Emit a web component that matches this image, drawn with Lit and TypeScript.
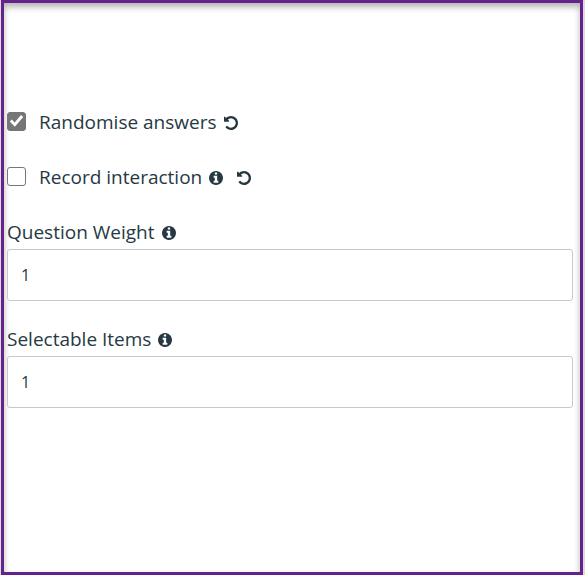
import { LitElement, html, css, svg } from "lit";
import { customElement } from "lit/decorators.js";

const UNDO =
  "M1536 896q0 156-61 298t-164 245-245 164-298 61q-172 0-327-72.500T177 1387q-7-10-6.500-22.500T179 1344l137-138q10-9 25-9 16 2 23 12 73 95 179 147t225 52q104 0 198.500-40.500T1130 1258t109.500-163.500T1280 896t-40.500-198.500T1130 534 966.500 424.500 768 384q-98 0-188 35.500T420 521l137 138q31 30 14 69-17 40-59 40H64q-26 0-45-19T0 704V256q0-42 40-59 39-17 69 14l130 129q107-101 244.500-156.500T768 128q156 0 298 61t245 164 164 245 61 298z";
const INFO =
  "M1024 1376v-160q0-14-9-23t-23-9h-96V672q0-14-9-23t-23-9H544q-14 0-23 9t-9 23v160q0 14 9 23t23 9h96v320h-96q-14 0-23 9t-9 23v160q0 14 9 23t23 9h448q14 0 23-9t9-23zM896 480V320q0-14-9-23t-23-9H672q-14 0-23 9t-9 23v160q0 14 9 23t23 9h192q14 0 23-9t9-23zm640 416q0 209-103 385.500T1153.500 1561 768 1664t-385.500-103T103 1281.500 0 896t103-385.500T382.500 231 768 128t385.500 103T1433 510.500 1536 896z";

@customElement("app-root")
export class AppRoot extends LitElement {
  static styles = css`
    :host {
      display: block;
      box-sizing: border-box;
      min-height: 100vh;
      padding: 0 2px 0 1px;
      background: #dcdcdc;
      color: #263943;
      font-family: "Open Sans", "Noto Sans", sans-serif;
      font-size: 19px;
      line-height: 28px;
    }
    .panel {
      box-sizing: border-box;
      min-height: 100vh;
      border: 3px solid #65218c;
      padding: 105px 7px 24px 3px;
      background: #fff;
      box-shadow: inset 0 4px 6px rgba(0, 0, 0, 0.3);
    }
    form {
      display: flex;
      flex-direction: column;
      gap: 27px;
    }
    .row {
      display: flex;
      align-items: center;
    }
    .row label {
      white-space: nowrap;
    }
    .fields {
      display: flex;
      flex-direction: column;
      gap: 24px;
    }
    .field {
      display: flex;
      flex-direction: column;
      gap: 3px;
    }
    .check {
      appearance: none;
      box-sizing: border-box;
      flex: none;
      display: grid;
      place-items: center;
      width: 19px;
      height: 19px;
      margin: 0 13px 2px 0;
      border: 1px solid #767676;
      border-radius: 3px;
      background: #fff;
    }
    .check:checked {
      background: #767676;
    }
    .check:checked::before {
      content: "";
      width: 15px;
      height: 15px;
      background: #fff;
      clip-path: polygon(5% 54%, 19% 40%, 38% 60%, 80% 10%, 95% 23%, 39% 89%);
    }
    .icon {
      flex: none;
      display: block;
      width: 14px;
      height: 14px;
      margin: 2px 0 0 7px;
      padding: 0;
      border: 0;
      background: none;
      color: inherit;
      cursor: pointer;
    }
    .icon + .icon {
      margin-left: 14px;
    }
    svg {
      display: block;
      width: 100%;
      height: 100%;
      fill: currentColor;
    }
    .text {
      box-sizing: border-box;
      width: 100%;
      height: 52px;
      padding: 0 13px;
      border: 1px solid #c8c8c8;
      border-radius: 3px;
      background: #fff;
      color: inherit;
      font-family: inherit;
      font-size: 16px;
    }
  `;

  private icon(label: string, path: string) {
    return html`<button class="icon" type="button" aria-label=${label}>
      <svg viewBox="0 128 1536 1536" aria-hidden="true">${svg`<path d=${path}></path>`}</svg>
    </button>`;
  }

  private field(id: string, label: string) {
    return html`<div class="field">
      <div class="row">
        <label for=${id}>${label}</label>${this.icon(`About ${label}`, INFO)}
      </div>
      <input class="text" id=${id} type="text" inputmode="numeric" value="1" />
    </div>`;
  }

  render() {
    return html`<main class="panel">
      <form>
        <div class="row">
          <input class="check" id="randomise" type="checkbox" checked />
          <label for="randomise">Randomise answers</label>
          ${this.icon("Reset Randomise answers", UNDO)}
        </div>
        <div class="row">
          <input class="check" id="record" type="checkbox" />
          <label for="record">Record interaction</label>
          ${this.icon("About Record interaction", INFO)}
          ${this.icon("Reset Record interaction", UNDO)}
        </div>
        <div class="fields">
          ${this.field("weight", "Question Weight")}
          ${this.field("items", "Selectable Items")}
        </div>
      </form>
    </main>`;
  }
}
